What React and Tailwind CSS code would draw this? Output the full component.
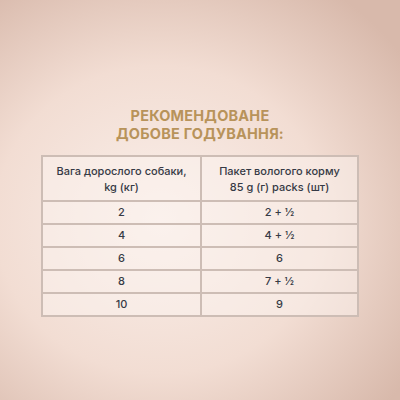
export default function App() {
  const rows = [
    ["2", "2 + ½"],
    ["4", "4 + ½"],
    ["6", "6"],
    ["8", "7 + ½"],
    ["10", "9"],
  ];

  return (
    <div className="w-[400px] h-[400px] overflow-hidden bg-[radial-gradient(ellipse_75%_70%_at_40%_55%,#faefea_0%,#f2ddd3_55%,#d8b9ab_100%)] font-['Inter','Open_Sans',sans-serif]">
      <div className="flex flex-col items-center pt-[107px]">
        <h1 className="text-center text-[14.5px] leading-[18px] font-bold text-[#b8935a] tracking-[0.2px]">
          РЕКОМЕНДОВАНЕ
          <br />
          ДОБОВЕ ГОДУВАННЯ:
        </h1>

        <table className="mt-[12px] w-[318px] border-collapse border-2 border-[#cdbdb5] bg-[#fbf3ef]/50 text-[11px] font-medium text-[#363a45] text-center">
          <thead>
            <tr className="h-[45px]">
              <th className="w-[159px] border-2 border-[#cdbdb5] font-medium leading-[16px]">
                Вага дорослого собаки,
                <br />
                kg (кг)
              </th>
              <th className="border-2 border-[#cdbdb5] font-medium leading-[16px]">
                Пакет вологого корму
                <br />
                85 g (г) packs (шт)
              </th>
            </tr>
          </thead>
          <tbody>
            {rows.map(([a, b]) => (
              <tr key={a} className="h-[23px]">
                <td className="border-2 border-[#cdbdb5]">{a}</td>
                <td className="border-2 border-[#cdbdb5]">{b}</td>
              </tr>
            ))}
          </tbody>
        </table>
      </div>
    </div>
  );
}
